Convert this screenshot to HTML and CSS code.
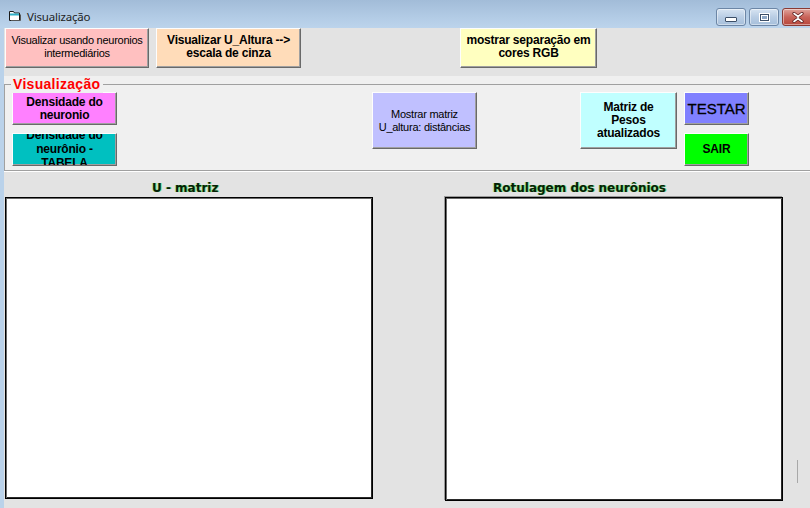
FILE: index.html
```html
<!DOCTYPE html>
<html>
<head>
<meta charset="utf-8">
<link rel="stylesheet" href="styles.css">
</head>
<body>
<div class="window">
  <div class="titlebar">
    <svg class="appicon" width="13" height="12" viewBox="0 0 13 12">
      <path d="M1.5 1.5h4l1 1.5h5v7.5h-10z" fill="#fff" stroke="#1a1a1a" stroke-width="1"/>
      <rect x="2" y="3.5" width="9" height="2" fill="#2fb0c8"/>
      <path d="M3 10.5h9.5v-6" fill="none" stroke="#555" stroke-width="1"/>
    </svg>
    <span class="title">Visualização</span>
    <div class="controls">
      <div class="cbtn minb"><span class="minglyph"></span></div>
      <div class="cbtn maxb"><span class="maxglyph"></span></div>
      <div class="cbtn closeb">
        <svg width="14" height="11" viewBox="0 0 14 11"><path d="M3 1.5L7 4.5L11 1.5M3 9.5L7 6.5L11 9.5M7 4.5v2" fill="none" stroke="#5a1f1f" stroke-width="3.2" stroke-linecap="round"/><path d="M3 1.5L7 4.5L11 1.5M3 9.5L7 6.5L11 9.5M7 4.5v2" fill="none" stroke="#fff" stroke-width="1.6" stroke-linecap="round"/></svg>
      </div>
    </div>
  </div>
  <div class="client">
    <div class="toprow">
      <div class="btn b-pink">Visualizar usando neuronios<br>intermediários</div>
      <div class="btn bold b-peach">Visualizar U_Altura --&gt;<br>escala de cinza</div>
      <div class="btn bold wide b-yellow">mostrar separação em<br>cores RGB</div>
    </div>
    <div class="panel">
      <div class="frame">
        <span class="legend">Visualização</span>
        <div class="col c1">
          <div class="btn bold b-magenta short">Densidade do<br>neuronio</div>
          <div class="btn bold b-teal short">Densidade do<br>neurônio -<br>TABELA</div>
        </div>
        <div class="col c2">
          <div class="btn b-lav tall">Mostrar matriz<br>U_altura: distâncias</div>
        </div>
        <div class="col c3">
          <div class="btn bold b-cyan tall">Matriz de<br>Pesos<br>atualizados</div>
        </div>
        <div class="col c4">
          <div class="btn b-blue big testar">TESTAR</div>
          <div class="btn bold b-green short">SAIR</div>
        </div>
      </div>
    </div>
    <div class="views">
      <div class="view vleft">
        <div class="vlabel">U - matriz</div>
        <div class="pic"></div>
      </div>
      <div class="view vright">
        <div class="vlabel">Rotulagem dos neurônios</div>
        <div class="pic"></div>
      </div>
    </div>
    <div class="tick"></div>
  </div>
</div>
</body>
</html>
```

FILE: styles.css
```css
html, body {
  margin: 0;
  padding: 0;
}
body {
  width: 810px;
  height: 508px;
  overflow: hidden;
  font-family: "Liberation Sans", Arial, sans-serif;
  background: #e3e3e3;
}
.window {
  width: 810px;
  height: 508px;
  display: flex;
  flex-direction: column;
}
.titlebar {
  height: 28px;
  flex: none;
  background: linear-gradient(#a2bcd8, #b2cbe5 60%, #bcd4ec);
  display: flex;
  align-items: center;
  position: relative;
}
.appicon {
  margin-left: 8px;
  margin-top: 4px;
}
.title {
  margin-left: 6px;
  margin-top: 4px;
  font-family: "Noto Sans", "Open Sans", sans-serif;
  font-size: 11.5px;
  letter-spacing: -0.2px;
  color: #1e1e1e;
}
.controls {
  position: absolute;
  top: 8px;
  left: 716px;
  display: flex;
  gap: 3px;
}
.cbtn {
  height: 16px;
  border: 1px solid #6c86a6;
  border-radius: 3px;
  display: flex;
  align-items: center;
  justify-content: center;
  box-shadow: inset 0 0 0 1px rgba(255,255,255,0.45);
}
.minb, .maxb {
  width: 28px;
  background: linear-gradient(#d7e4f2, #b9cde4 50%, #a6bfdb);
}
.closeb {
  width: 30px;
  border-color: #8a3a34;
  background: linear-gradient(#e0a49c, #c9645a 50%, #b8473c);
}
.minglyph {
  width: 10px;
  height: 3px;
  margin-top: 5px;
  background: #fff;
  border: 1px solid #3c4f68;
  border-radius: 1px;
}
.maxglyph {
  width: 7px;
  height: 5px;
  border: 1px solid #3c4f68;
  box-shadow: inset 0 0 0 1px #fff, 0 0 0 1px #fff;
  background: #8da6c4;
}
.client {
  flex: 1;
  border-left: 4px solid #bad2ea;
  background: #e3e3e3;
  position: relative;
  display: flex;
  flex-direction: column;
}
.btn {
  box-sizing: border-box;
  border: 1px solid;
  border-color: #fdfdfd #696969 #696969 #fdfdfd;
  box-shadow: inset -1px -1px 0 #a0a0a0;
  display: flex;
  align-items: center;
  justify-content: center;
  text-align: center;
  font-size: 11px;
  line-height: 13px;
  color: #000;
  overflow: hidden;
  letter-spacing: -0.25px;
}
.btn.bold {
  font-weight: bold;
  font-size: 12px;
  letter-spacing: -0.2px;
}
.toprow {
  display: flex;
  height: 40px;
  padding-left: 1px;
}
.toprow .btn {
  height: 40px;
  padding-bottom: 2px;
}
.b-pink {
  width: 144px;
  background: #ffc0c0;
}
.b-peach {
  width: 145px;
  margin-left: 7px;
  background: #ffdcb9;
}
.b-yellow {
  width: 137px;
  margin-left: 159px;
  background: #ffffc0;
}
.panel {
  margin-top: 8px;
  height: 96px;
  background: #f0f0f0;
  padding-top: 8px;
  box-sizing: border-box;
}
.frame {
  position: relative;
  height: 87px;
  box-sizing: border-box;
  border: 1px solid #a0a0a0;
  border-right: none;
  margin-right: -10px;
  box-shadow: 0 1px 0 #fff;
  display: flex;
  padding-left: 7px;
  padding-top: 7px;
}
.legend {
  position: absolute;
  left: 6px;
  top: -9px;
  padding: 0 3px 0 2px;
  background: #f0f0f0;
  color: #ff0000;
  font-weight: bold;
  font-size: 14px;
  letter-spacing: 0.3px;
  line-height: 17px;
}
.col {
  display: flex;
  flex-direction: column;
  gap: 8px;
}
.c1 { width: 105px; }
.c2 { width: 105px; margin-left: 255px; }
.c3 { width: 97px; margin-left: 103px; }
.c4 { width: 65px; margin-left: 7px; }
.short { height: 33px; }
.tall { height: 57px; }
.testar { height: 33px; }
.b-magenta { background: #ff80ff; }
.b-teal {
  background: #00c0c0;
  line-height: 14px;
  padding-bottom: 1px;
}
.b-lav { background: #c0c0ff; }
.b-cyan { background: #c0ffff; }
.b-blue { background: #8080ff; }
.b-green { background: #00ff00; }
.big {
  font-size: 15px;
  letter-spacing: 0;
  -webkit-text-stroke: 0.3px #000;
}
.views {
  flex: 1;
  display: flex;
  padding-top: 9px;
}
.view {
  display: flex;
  flex-direction: column;
}
.vlabel {
  font-family: "DejaVu Sans", Verdana, sans-serif;
  font-weight: bold;
  font-size: 12px;
  line-height: 15px;
  color: #062006;
  text-shadow: 1px 0 0 rgba(40, 220, 40, 0.55), -1px 0 0 rgba(40, 220, 40, 0.35);
  height: 16px;
}
.pic {
  box-sizing: border-box;
  background: #fff;
  border: 1px solid #000;
  box-shadow: inset 1px 1px 0 #6a6a6a, inset -1px -1px 0 #2a2a2a;
}
.vleft {
  margin-left: 1px;
  width: 368px;
}
.vleft .vlabel {
  padding-left: 147px;
}
.vleft .pic {
  height: 302px;
}
.vright {
  margin-left: 72px;
  width: 338px;
}
.vright .vlabel {
  padding-left: 48px;
}
.vright .pic {
  height: 304px;
  box-shadow: -1px -1px 0 #9a9a9a, inset 1px 1px 0 #6a6a6a, inset -1px -1px 0 #2a2a2a;
}
.tick {
  position: absolute;
  left: 793px;
  top: 432px;
  width: 1px;
  height: 23px;
  background: #a8a8a8;
}
```
